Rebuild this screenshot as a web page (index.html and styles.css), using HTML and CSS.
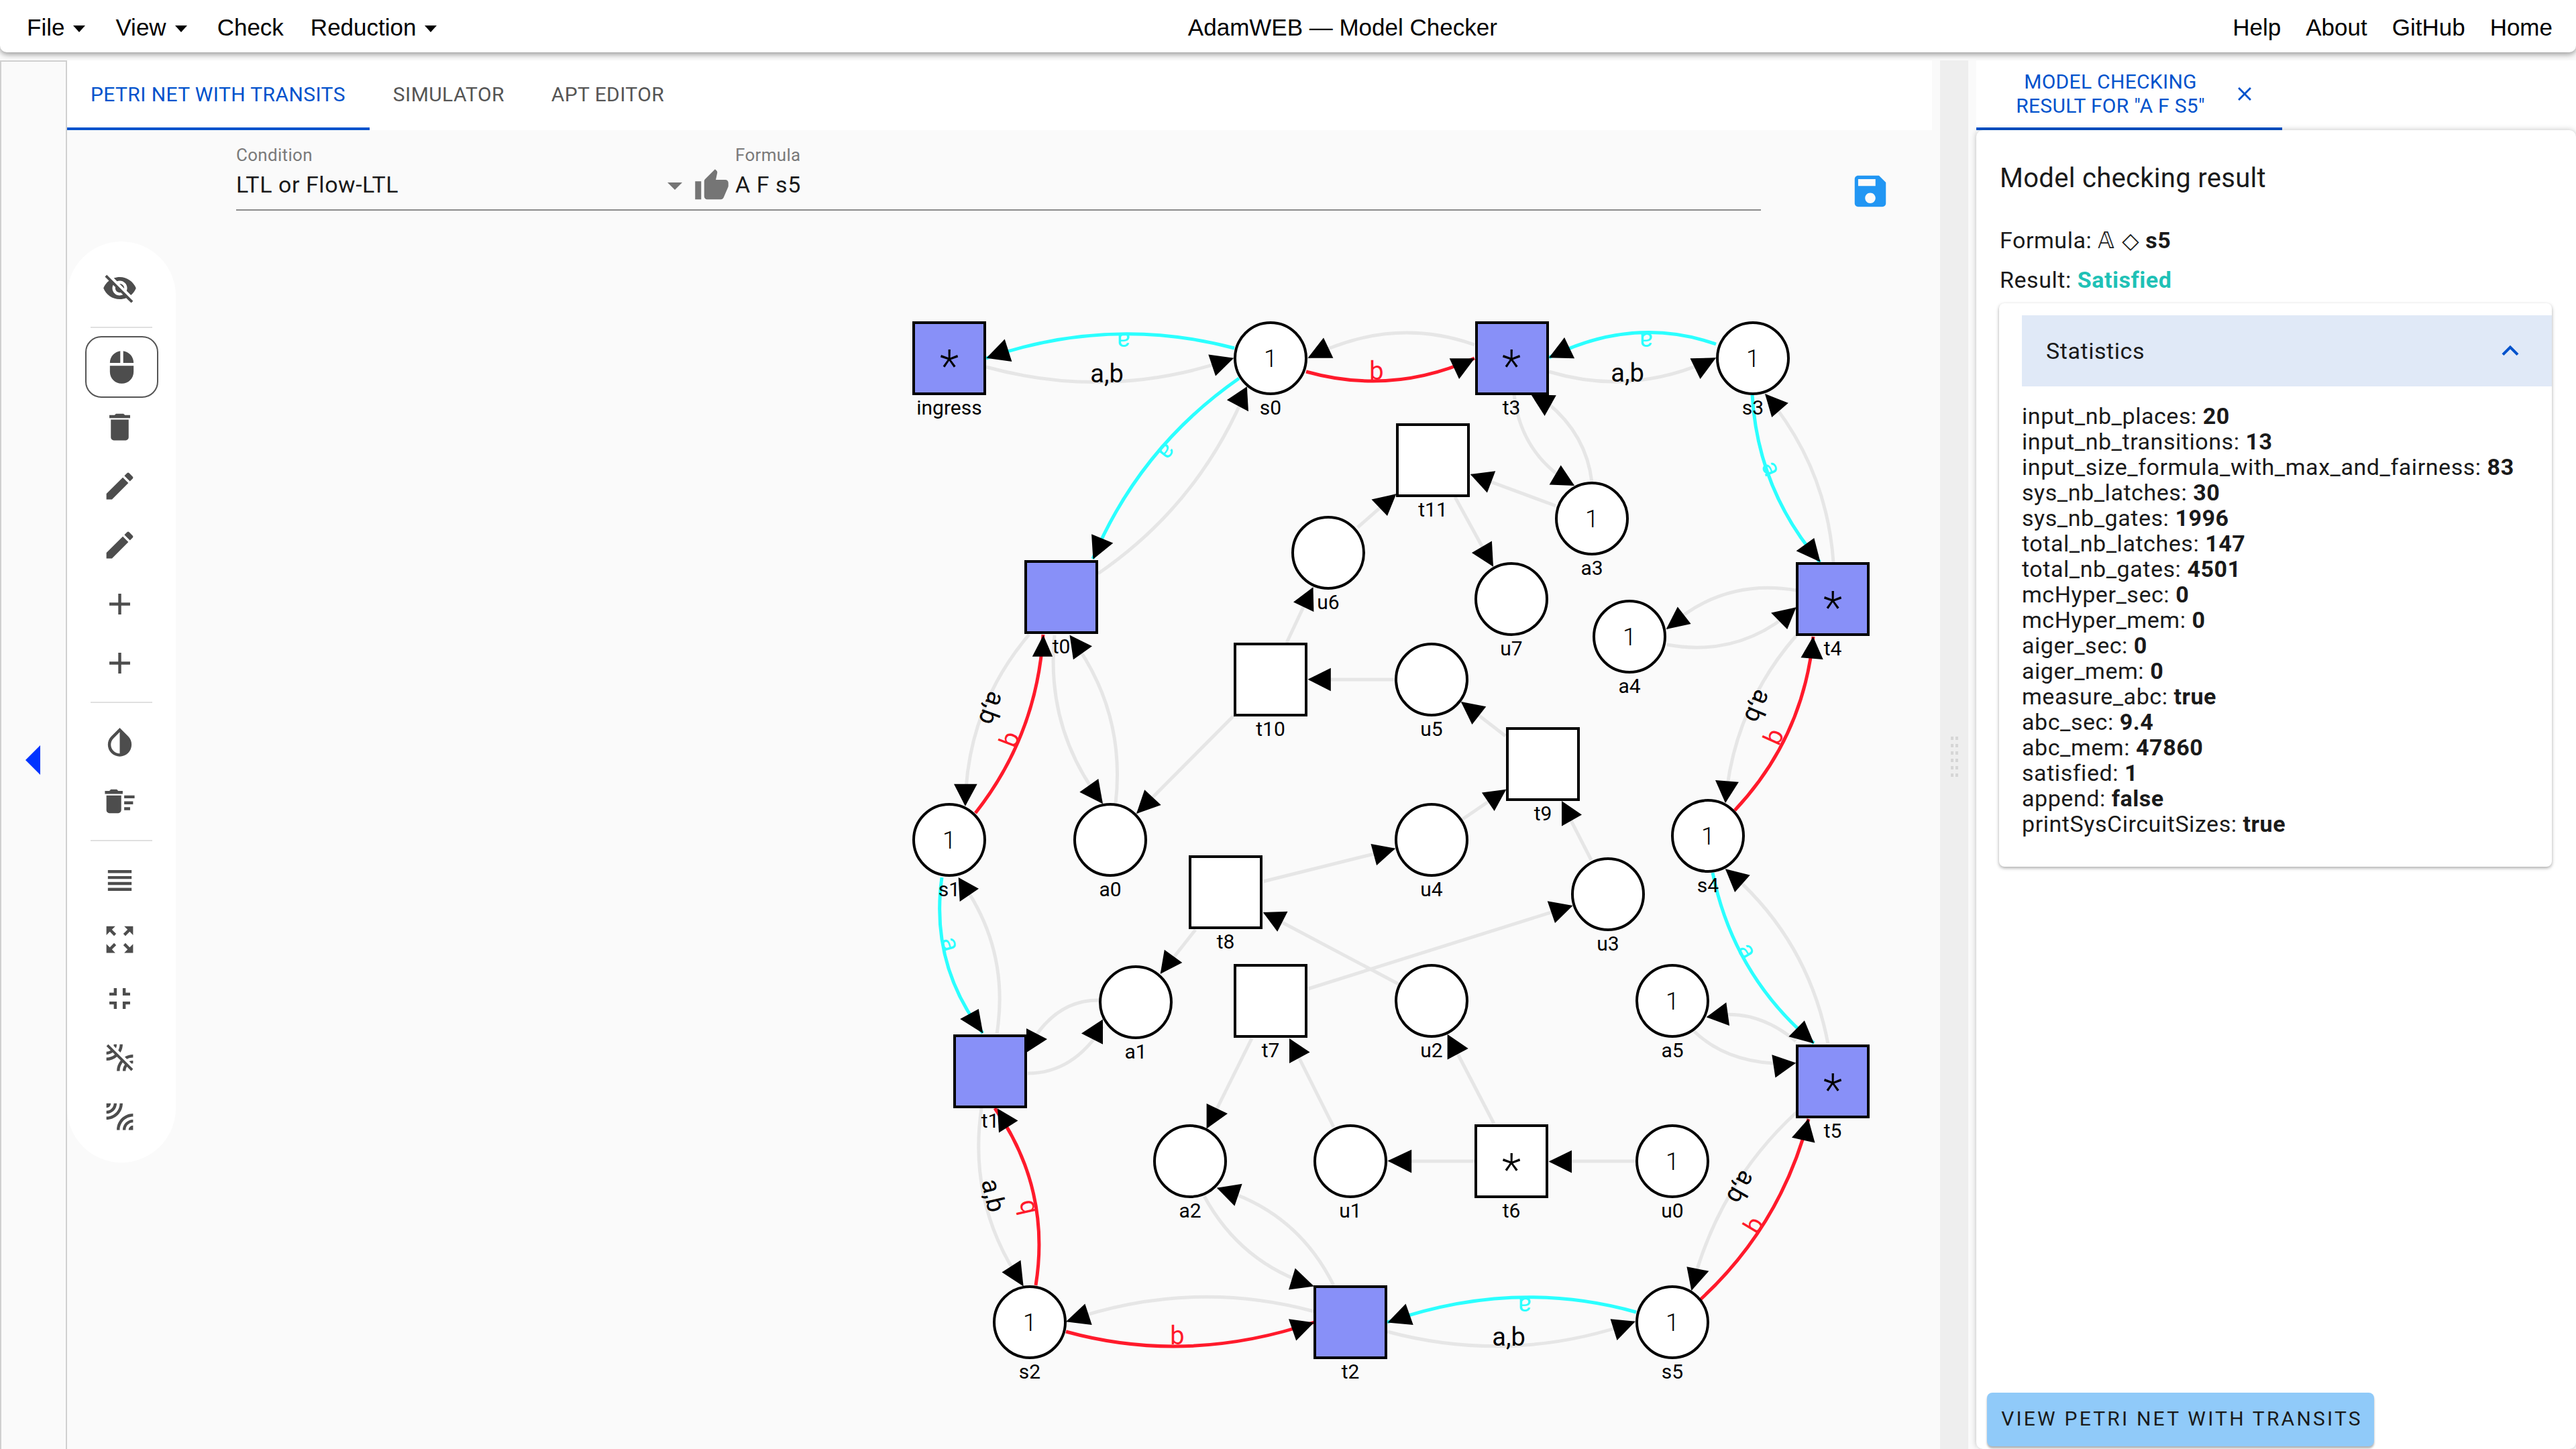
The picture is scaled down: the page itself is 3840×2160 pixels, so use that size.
FILE: index.html
```html
<!DOCTYPE html>
<html>
<head>
    <title>AdamWEB - Model Checker</title>
    <link rel="stylesheet" href="styles.css">
</head>
<body>
    <header class="app-bar">
        <nav class="menu">
            <span class="menu-item">File<i class="caret"></i></span>
            <span class="menu-item">View<i class="caret"></i></span>
            <span class="menu-item">Check</span>
            <span class="menu-item">Reduction<i class="caret"></i></span>
        </nav>
        <div class="app-title">AdamWEB — Model Checker</div>
        <nav class="links">
            <span>Help</span>
            <span>About</span>
            <span>GitHub</span>
            <span>Home</span>
        </nav>
    </header>

    <div class="workspace">
        <aside class="rail"><i class="collapse-arrow"></i></aside>

        <main class="main-pane">
            <div class="tabs">
                <div class="tab tab-active">PETRI NET WITH TRANSITS</div>
                <div class="tab">SIMULATOR</div>
                <div class="tab">APT EDITOR</div>
            </div>

            <div class="canvas">
                <svg class="graph" viewBox="100 194 2792 1966" width="2792" height="1966">
                    <!-- plain arcs -->
                    <g class="arc arc-grey">
                        <path d="M1470 547Q1655 598 1839 534"/>
                        <path d="M2198 514Q2075 470 1949 534"/>
                        <path d="M2309 554Q2435 592 2558 533"/>
                        <path d="M1637 855Q1790 750 1860 576"/>
                        <path d="M1534 946Q1441 1056 1439 1200"/>
                        <path d="M1572 947Q1558 1087 1644 1198"/>
                        <path d="M1663 1198Q1679 1059 1594 947"/>
                        <path d="M2373 719Q2365 648 2306 600"/>
                        <path d="M2257 588Q2267 679 2347 724"/>
                        <path d="M2319 754L2192 707"/>
                        <path d="M2024 786L2081 736"/>
                        <path d="M2169 741L2226 845"/>
                        <path d="M2733 838Q2723 696 2631 587"/>
                        <path d="M2678 880Q2567 861 2484 938"/>
                        <path d="M2485 961Q2595 981 2678 905"/>
                        <path d="M2678 947Q2584 1055 2572 1197"/>
                        <path d="M2244 1097L2178 1046"/>
                        <path d="M2179 1222L2245 1177"/>
                        <path d="M2372 1282L2330 1200"/>
                        <path d="M2080 1013H1950"/>
                        <path d="M1918 958L1957 875"/>
                        <path d="M1839 1067L1694 1213"/>
                        <path d="M1883 1314L2080 1265"/>
                        <path d="M2085 1467L1883 1360"/>
                        <path d="M1782 1386L1730 1452"/>
                        <path d="M1950 1474L2344 1350"/>
                        <path d="M1866 1548L1799 1683"/>
                        <path d="M1988 1680L1922 1548"/>
                        <path d="M2198 1731H2068"/>
                        <path d="M2227 1675L2173 1571"/>
                        <path d="M2439 1731H2309"/>
                        <path d="M1486 1541Q1506 1414 1430 1310"/>
                        <path d="M1639 1491Q1578 1490 1540 1550"/>
                        <path d="M1532 1600Q1600 1600 1644 1530"/>
                        <path d="M1959 1955Q1775 1905 1589 1970"/>
                        <path d="M1795 1783Q1850 1884 1959 1917"/>
                        <path d="M1988 1916Q1933 1805 1814 1771"/>
                        <path d="M2068 1985Q2255 2035 2438 1970"/>
                        <path d="M2725 1556Q2695 1398 2572 1295"/>
                        <path d="M2678 1658Q2560 1767 2521 1924"/>
                        <path d="M2525 1537Q2580 1590 2677 1585"/>
                        <path d="M2677 1552Q2615 1500 2544 1516"/>
                        <path d="M1463 1652Q1442 1797 1526 1917"/>
                    </g>
                    <g class="arc arc-cyan">
                        <path d="M1840 519Q1655 470 1470 534"/>
                        <path d="M1847 564Q1699 667 1629 833"/>
                        <path d="M2558 513Q2435 470 2309 533"/>
                        <path d="M2612 588Q2620 730 2713 838"/>
                        <path d="M1404 1308Q1386 1437 1465 1540"/>
                        <path d="M2553 1301Q2584 1454 2704 1555"/>
                        <path d="M2439 1956Q2258 1905 2068 1971"/>
                    </g>
                    <g class="arc arc-red">
                        <path d="M1947 554Q2075 590 2198 534"/>
                        <path d="M1454 1212Q1546 1095 1555 946"/>
                        <path d="M2586 1208Q2689 1098 2703 949"/>
                        <path d="M1544 1916Q1567 1772 1483 1652"/>
                        <path d="M1589 1985Q1770 2035 1959 1971"/>
                        <path d="M2535 1937Q2655 1826 2696 1668"/>
                    </g>

                    <!-- transitions -->
                    <g class="node">
                        <rect class="transit" x="1362" y="481" width="106" height="106"/>
                        <rect class="transit" x="2201" y="481" width="106" height="106"/>
                        <rect class="transit" x="1529" y="837" width="106" height="106"/>
                        <rect class="transit" x="2679" y="840" width="106" height="106"/>
                        <rect class="transit" x="1423" y="1544" width="106" height="106"/>
                        <rect class="transit" x="2679" y="1559" width="106" height="106"/>
                        <rect class="transit" x="1960" y="1918" width="106" height="106"/>
                        <rect x="2200" y="1678" width="106" height="106"/>
                        <rect x="1841" y="1439" width="106" height="106"/>
                        <rect x="1774" y="1277" width="106" height="106"/>
                        <rect x="2247" y="1086" width="106" height="106"/>
                        <rect x="1841" y="960" width="106" height="106"/>
                        <rect x="2083" y="633" width="106" height="106"/>
                    </g>
                    <!-- places -->
                    <g class="node">
                        <circle cx="1894" cy="534" r="53"/>
                        <circle cx="2613" cy="534" r="53"/>
                        <circle cx="2373" cy="773" r="53"/>
                        <circle cx="1980" cy="824" r="53"/>
                        <circle cx="2253" cy="893" r="53"/>
                        <circle cx="2429" cy="949" r="53"/>
                        <circle cx="2134" cy="1013" r="53"/>
                        <circle cx="1415" cy="1252" r="53"/>
                        <circle cx="1655" cy="1252" r="53"/>
                        <circle cx="2134" cy="1252" r="53"/>
                        <circle cx="2546" cy="1246" r="53"/>
                        <circle cx="2397" cy="1333" r="53"/>
                        <circle cx="1693" cy="1494" r="53"/>
                        <circle cx="2134" cy="1492" r="53"/>
                        <circle cx="2493" cy="1492" r="53"/>
                        <circle cx="1774" cy="1731" r="53"/>
                        <circle cx="2013" cy="1731" r="53"/>
                        <circle cx="2493" cy="1731" r="53"/>
                        <circle cx="1535" cy="1971" r="53"/>
                        <circle cx="2493" cy="1971" r="53"/>
                    </g>

                    <!-- arrow heads -->
                    <g class="heads">
                        <polygon points="1470.4,533.8 1497.7,505.6 1508.4,539.1"/>
                        <polygon points="1839.2,533.8 1801.3,528.4 1812,560.5"/>
                        <polygon points="1949.5,533.8 1973,503.4 1987.4,533.8"/>
                        <polygon points="1629.4,833.8 1627.1,796.3 1659.3,809.6"/>
                        <polygon points="1858.8,576.2 1828.9,596.3 1861,613.2"/>
                        <polygon points="1555.3,946.7 1538.8,978.8 1569.1,978.8"/>
                        <polygon points="1594.6,946.7 1628,963.2 1599.9,983.3"/>
                        <polygon points="1957.5,875.3 1928,897.6 1958.4,911.9"/>
                        <polygon points="1949.5,1012.8 1983.8,995.8 1983.8,1030.2"/>
                        <polygon points="2198.2,534.3 2160.7,534.3 2175.1,565.1"/>
                        <polygon points="2309,533.3 2332.1,503.1 2347.1,534.3"/>
                        <polygon points="2558.1,533.3 2519.5,534.3 2534.5,565.1"/>
                        <polygon points="2282.3,588.1 2319.8,589.2 2302.6,619.9"/>
                        <polygon points="2347.1,724.1 2326.7,693.4 2309.6,722.5"/>
                        <polygon points="2191.8,707.1 2229.2,702.2 2216.9,734.6"/>
                        <polygon points="2081.4,736.2 2044.5,744.4 2068,769.1"/>
                        <polygon points="2226,844.8 2223.9,806.4 2193.9,824"/>
                        <polygon points="2713.5,837.7 2677.6,821.2 2704.3,802"/>
                        <polygon points="2631,587 2665.8,600.7 2641.2,622.1"/>
                        <polygon points="2483.7,938.1 2500.8,904.6 2520.6,929.9"/>
                        <polygon points="2677.6,905.2 2640.1,913.4 2664.2,938.1"/>
                        <polygon points="2572,1197 2557,1163 2591.9,1165.7"/>
                        <polygon points="2702.7,949 2684.5,980.3 2717.7,983"/>
                        <polygon points="2177.8,1046.1 2215.3,1053.3 2194.4,1080.1"/>
                        <polygon points="2245.3,1176.7 2208.9,1181.6 2227.6,1209"/>
                        <polygon points="2328,1194 2328,1231.6 2358,1214.6"/>
                        <polygon points="1438.9,1201.8 1422,1168.8 1456.7,1168.8"/>
                        <polygon points="1644,1198.2 1609.3,1180.8 1637.3,1161"/>
                        <polygon points="1694,1213.1 1706.2,1177.2 1730.7,1200"/>
                        <polygon points="1428.7,1308 1459,1324.7 1430.7,1344"/>
                        <polygon points="2080.2,1264.7 2043.5,1258.1 2052.1,1289.9"/>
                        <polygon points="1882.8,1360 1919.5,1358.8 1904.2,1388.8"/>
                        <polygon points="1729.7,1451.8 1735.8,1415.8 1762.3,1435"/>
                        <polygon points="1530,1533 1561,1549 1530,1569"/>
                        <polygon points="1612,1540.5 1644,1519.5 1644,1556.7"/>
                        <polygon points="1465.4,1540.5 1431.2,1518.9 1458.8,1503.9"/>
                        <polygon points="1798.6,1645 1830,1660 1798.6,1682.6"/>
                        <polygon points="1922,1548 1952.6,1568.6 1922,1585"/>
                        <polygon points="2068.5,1730.5 2104.2,1713.7 2104.2,1748.5"/>
                        <polygon points="1487,1652.6 1517.5,1670.6 1489,1688.6"/>
                        <polygon points="1525.6,1917.6 1493.5,1896.6 1521.5,1878.6"/>
                        <polygon points="1813.9,1770.7 1851.6,1764.7 1840.4,1797.7"/>
                        <polygon points="1958.8,1917.6 1930.7,1890.6 1921,1922.4"/>
                        <polygon points="1588.9,1970.3 1617.4,1943.4 1627.7,1975.1"/>
                        <polygon points="1958.8,1971.5 1921,1966.2 1932.2,1998.5"/>
                        <polygon points="2068.5,1971.5 2095.5,1943.4 2106.7,1975.1"/>
                        <polygon points="2344.5,1349.9 2306.7,1343.3 2318,1375.9"/>
                        <polygon points="2704.1,1555.5 2666.3,1545.3 2689.9,1521.3"/>
                        <polygon points="2571.9,1295.3 2608.7,1304.5 2586.1,1330"/>
                        <polygon points="2677.2,1584.6 2641.3,1572.3 2646.5,1606.5"/>
                        <polygon points="2543.6,1516.2 2573.3,1494.3 2578.1,1529"/>
                        <polygon points="2157.6,1541.7 2188.7,1563 2157.6,1579.5"/>
                        <polygon points="2308.6,1731.5 2343,1714.7 2343,1748.4"/>
                        <polygon points="2521.4,1923.9 2514.4,1888.2 2547.4,1894.8"/>
                        <polygon points="2695.6,1667.8 2671,1695.8 2705.5,1703.5"/>
                        <polygon points="2437.9,1969.8 2400.6,1966.2 2410.5,1997.9"/>
                    </g>

                    <!-- arc labels -->
                    <g class="arc-label label-weight">
                        <text transform="translate(1650 557)">a,b</text>
                        <text transform="translate(1479 1056) rotate(110)">a,b</text>
                        <text transform="translate(2426 556)">a,b</text>
                        <text transform="translate(2621 1053) rotate(113)">a,b</text>
                        <text transform="translate(2596 1770) rotate(120)">a,b</text>
                        <text transform="translate(2249 1993)">a,b</text>
                        <text transform="translate(1481 1782) rotate(77)">a,b</text>
                    </g>
                    <g class="arc-label label-cyan">
                        <text transform="translate(1675 509) rotate(180)">a</text>
                        <text transform="translate(1740 674) rotate(129)">a</text>
                        <text transform="translate(2454 509) rotate(180)">a</text>
                        <text transform="translate(2641 698) rotate(68)">a</text>
                        <text transform="translate(1417 1407) rotate(75)">a</text>
                        <text transform="translate(2605 1417) rotate(59)">a</text>
                        <text transform="translate(2273 1947) rotate(180)">a</text>
                    </g>
                    <g class="arc-label label-red">
                        <text transform="translate(2052 553)">b</text>
                        <text transform="translate(1505 1102) rotate(-69)">b</text>
                        <text transform="translate(2644 1098) rotate(-66)">b</text>
                        <text transform="translate(2614 1826) rotate(-59)">b</text>
                        <text transform="translate(1529 1800) rotate(-103)">b</text>
                        <text transform="translate(1755 1991)">b</text>
                    </g>

                    <!-- tokens and fairness marks -->
                    <g class="token">
                        <text x="1894" y="547">1</text>
                        <text x="2613" y="547">1</text>
                        <text x="2373" y="786">1</text>
                        <text x="2429" y="962">1</text>
                        <text x="1415" y="1265">1</text>
                        <text x="2546" y="1259">1</text>
                        <text x="2493" y="1505">1</text>
                        <text x="2493" y="1744">1</text>
                        <text x="1535" y="1984">1</text>
                        <text x="2493" y="1984">1</text>
                    </g>
                    <g class="star">
                        <text x="1415" y="569">*</text>
                        <text x="2253" y="569">*</text>
                        <text x="2732" y="929">*</text>
                        <text x="2732" y="1648">*</text>
                        <text x="2253" y="1767">*</text>
                    </g>

                    <!-- node names -->
                    <g class="node-name">
                        <text x="1415" y="618">ingress</text>
                        <text x="1894" y="618">s0</text>
                        <text x="2253" y="618">t3</text>
                        <text x="2613" y="618">s3</text>
                        <text x="2136" y="770">t11</text>
                        <text x="2373" y="857">a3</text>
                        <text x="1980" y="908">u6</text>
                        <text x="1582" y="974">t0</text>
                        <text x="2253" y="977">u7</text>
                        <text x="2732" y="977">t4</text>
                        <text x="2429" y="1033">a4</text>
                        <text x="1894" y="1097">t10</text>
                        <text x="2134" y="1097">u5</text>
                        <text x="2300" y="1223">t9</text>
                        <text x="1415" y="1336">s1</text>
                        <text x="1655" y="1336">a0</text>
                        <text x="2134" y="1336">u4</text>
                        <text x="2546" y="1330">s4</text>
                        <text x="1827" y="1414">t8</text>
                        <text x="2397" y="1417">u3</text>
                        <text x="1894" y="1576">t7</text>
                        <text x="1693" y="1578">a1</text>
                        <text x="2134" y="1576">u2</text>
                        <text x="2493" y="1576">a5</text>
                        <text x="1476" y="1681">t1</text>
                        <text x="2732" y="1696">t5</text>
                        <text x="1774" y="1815">a2</text>
                        <text x="2013" y="1815">u1</text>
                        <text x="2253" y="1815">t6</text>
                        <text x="2493" y="1815">u0</text>
                        <text x="1535" y="2055">s2</text>
                        <text x="2013" y="2055">t2</text>
                        <text x="2493" y="2055">s5</text>
                    </g>
                </svg>

                <div class="formula-row">
                    <div class="formula-bar">
                        <div class="field-select">
                            <label class="field-label">Condition</label>
                            <div class="select-value"><span>LTL or Flow-LTL</span><i class="select-caret"></i></div>
                        </div>
                        <svg class="thumb" viewBox="0 0 24 24"><path d="M1 21h4V9H1v12zm22-11c0-1.1-.9-2-2-2h-6.31l.95-4.57.03-.32c0-.41-.17-.79-.44-1.06L14.17 1 7.59 7.59C7.22 7.95 7 8.45 7 9v10c0 1.1.9 2 2 2h9c.83 0 1.54-.5 1.84-1.22l3.02-7.05c.09-.23.14-.47.14-.73v-2z"/></svg>
                        <div class="field-formula">
                            <label class="field-label">Formula</label>
                            <div class="formula-value">A F s5</div>
                        </div>
                    </div>
                    <svg class="save" viewBox="0 0 24 24"><path d="M17 3H5c-1.11 0-2 .9-2 2v14c0 1.1.89 2 2 2h14c1.1 0 2-.9 2-2V7l-4-4zm-5 16c-1.66 0-3-1.34-3-3s1.34-3 3-3 3 1.34 3 3-1.34 3-3 3zm3-10H5V5h10v4z"/></svg>
                </div>

                <div class="toolbar">
                    <div class="tool"><svg viewBox="0 0 24 24"><path d="M12 7c2.76 0 5 2.24 5 5 0 .65-.13 1.26-.36 1.83l2.92 2.92c1.51-1.26 2.7-2.89 3.43-4.75-1.73-4.39-6-7.5-11-7.5-1.4 0-2.74.25-3.98.7l2.16 2.16C10.74 7.13 11.35 7 12 7zM2 4.27l2.28 2.28.46.46C3.08 8.3 1.78 10.02 1 12c1.73 4.39 6 7.5 11 7.5 1.55 0 3.03-.3 4.38-.84l.42.42L19.73 22 21 20.73 3.27 3 2 4.27zM7.53 9.8l1.55 1.55c-.05.21-.08.43-.08.65 0 1.66 1.34 3 3 3 .22 0 .44-.03.65-.08l1.55 1.55c-.67.33-1.41.53-2.2.53-2.76 0-5-2.24-5-5 0-.79.2-1.53.53-2.2zm4.31-.78l3.15 3.15.02-.16c0-1.66-1.34-3-3-3l-.17.01z"/></svg></div>
                    <hr class="tool-divider">
                    <div class="tool tool-active"><svg viewBox="0 0 24 24"><path d="M13 1.07V9h7c0-4.08-3.05-7.44-7-7.93zM4 15c0 4.42 3.58 8 8 8s8-3.58 8-8v-4H4v4zm7-13.93C7.05 1.56 4 4.92 4 9h7V1.07z"/></svg></div>
                    <div class="tool"><svg viewBox="0 0 24 24"><path d="M6 19c0 1.1.9 2 2 2h8c1.1 0 2-.9 2-2V7H6v12zM19 4h-3.5l-1-1h-5l-1 1H5v2h14V4z"/></svg></div>
                    <div class="tool"><svg viewBox="0 0 24 24"><path d="M3 17.25V21h3.75L17.81 9.94l-3.75-3.75L3 17.25zM20.71 7.04c.39-.39.39-1.02 0-1.41l-2.34-2.34c-.39-.39-1.02-.39-1.41 0l-1.83 1.83 3.75 3.75 1.83-1.83z"/></svg></div>
                    <div class="tool"><svg viewBox="0 0 24 24"><path d="M3 17.25V21h3.75L17.81 9.94l-3.75-3.75L3 17.25zM20.71 7.04c.39-.39.39-1.02 0-1.41l-2.34-2.34c-.39-.39-1.02-.39-1.41 0l-1.83 1.83 3.75 3.75 1.83-1.83z"/></svg></div>
                    <div class="tool"><svg viewBox="0 0 24 24"><path d="M19 13h-6v6h-2v-6H5v-2h6V5h2v6h6v2z"/></svg></div>
                    <div class="tool"><svg viewBox="0 0 24 24"><path d="M19 13h-6v6h-2v-6H5v-2h6V5h2v6h6v2z"/></svg></div>
                    <hr class="tool-divider">
                    <div class="tool"><svg viewBox="0 0 24 24"><path d="M17.66 7.93L12 2.27 6.34 7.93c-3.12 3.12-3.12 8.19 0 11.31C7.9 20.8 9.95 21.58 12 21.58c2.05 0 4.1-.78 5.66-2.34 3.12-3.12 3.12-8.19 0-11.31zM12 19.59c-1.6 0-3.11-.62-4.24-1.76C6.62 16.69 6 15.19 6 13.59s.62-3.11 1.76-4.24L12 5.1v14.49z"/></svg></div>
                    <div class="tool"><svg viewBox="0 0 24 24"><path d="M15 16h4v2h-4zm0-8h7v2h-7zm0 4h6v2h-6zM3 18c0 1.1.9 2 2 2h6c1.1 0 2-.9 2-2V8H3v10zM14 5h-3l-1-1H6L5 5H2v2h12z"/></svg></div>
                    <hr class="tool-divider">
                    <div class="tool"><svg viewBox="0 0 24 24"><path d="M4 15h16v-2H4v2zm0 4h16v-2H4v2zm0-8h16V9H4v2zm0-6v2h16V5H4z"/></svg></div>
                    <div class="tool"><svg viewBox="0 0 24 24"><path d="M15 3l2.3 2.3-2.89 2.87 1.42 1.42L18.7 6.7 21 9V3zM3 9l2.3-2.3 2.87 2.89 1.42-1.42L6.7 5.3 9 3H3zm6 12l-2.3-2.3 2.89-2.87-1.42-1.42L5.3 17.3 3 15v6zm12-6l-2.3 2.3-2.87-2.89-1.42 1.42 2.89 2.87L15 21h6z"/></svg></div>
                    <div class="tool"><svg viewBox="0 0 24 24"><path d="M5 16h3v3h2v-5H5v2zm3-8H5v2h5V5H8v3zm6 11h2v-3h3v-2h-5v5zm2-11V5h-2v5h5V8h-3z"/></svg></div>
                    <div class="tool"><svg viewBox="0 0 24 24"><path d="M10 3H8c0 .37-.04.72-.12 1.06l1.59 1.59C9.81 4.84 10 3.94 10 3zM3 4.27l2.84 2.84C5.03 7.67 4.06 8 3 8v2c1.61 0 3.09-.55 4.27-1.46L8.7 9.97C7.14 11.24 5.16 12 3 12v2c2.71 0 5.19-.99 7.11-2.62l2.5 2.5C10.99 15.81 10 18.29 10 21h2c0-2.16.76-4.14 2.03-5.69l1.43 1.43C14.55 17.91 14 19.39 14 21h2c0-1.06.33-2.03.89-2.84L19.73 21 21 19.73 4.27 3 3 4.27zM14 3h-2c0 1.5-.37 2.91-1.02 4.16l1.46 1.46C13.42 6.98 14 5.06 14 3zm5.94 13.12c.34-.08.69-.12 1.06-.12v-2c-.94 0-1.84.19-2.66.52l1.6 1.6zm-4.56-4.56l1.46 1.46C18.09 12.37 19.5 12 21 12v-2c-2.06 0-3.98.58-5.62 1.56z"/></svg></div>
                    <div class="tool"><svg viewBox="0 0 24 24"><path d="M6 3H3v3c1.66 0 3-1.34 3-3zm8 0h-2c0 4.97-4.03 9-9 9v2c6.08 0 11-4.93 11-11zm-4 0H8c0 2.76-2.24 5-5 5v2c3.87 0 7-3.13 7-7zm0 18h2c0-4.97 4.03-9 9-9v-2c-6.07 0-11 4.93-11 11zm8 0h3v-3c-1.66 0-3 1.34-3 3zm-4 0h2c0-2.76 2.24-5 5-5v-2c-3.87 0-7 3.13-7 7z"/></svg></div>
                </div>
            </div>
        </main>

        <div class="gutter"><i class="grip"></i></div>
        <div class="gutter-edge"></div>

        <section class="side-pane">
            <div class="side-tabs">
                <div class="side-tab">
                    <span class="side-tab-text">MODEL CHECKING<br>RESULT FOR "A F S5"</span>
                    <svg class="tab-close" viewBox="0 0 24 24"><path d="M19 6.41L17.59 5 12 10.59 6.41 5 5 6.41 10.59 12 5 17.59 6.41 19 12 13.41 17.59 19 19 17.59 13.41 12z"/></svg>
                </div>
            </div>

            <div class="result-card">
                <h2 class="result-title">Model checking result</h2>
                <p class="result-line">Formula: <span class="math">𝔸 ◇</span> <b>s5</b></p>
                <p class="result-line">Result: <b class="satisfied">Satisfied</b></p>

                <div class="stats-card">
                    <div class="stats-head">
                        <span>Statistics</span>
                        <svg viewBox="0 0 24 24"><path d="M12 8l-6 6 1.41 1.41L12 10.83l4.59 4.58L18 14z"/></svg>
                    </div>
                    <ul class="stats-list">
                        <li>input_nb_places: <b>20</b></li>
                        <li>input_nb_transitions: <b>13</b></li>
                        <li>input_size_formula_with_max_and_fairness: <b>83</b></li>
                        <li>sys_nb_latches: <b>30</b></li>
                        <li>sys_nb_gates: <b>1996</b></li>
                        <li>total_nb_latches: <b>147</b></li>
                        <li>total_nb_gates: <b>4501</b></li>
                        <li>mcHyper_sec: <b>0</b></li>
                        <li>mcHyper_mem: <b>0</b></li>
                        <li>aiger_sec: <b>0</b></li>
                        <li>aiger_mem: <b>0</b></li>
                        <li>measure_abc: <b>true</b></li>
                        <li>abc_sec: <b>9.4</b></li>
                        <li>abc_mem: <b>47860</b></li>
                        <li>satisfied: <b>1</b></li>
                        <li>append: <b>false</b></li>
                        <li>printSysCircuitSizes: <b>true</b></li>
                    </ul>
                </div>

                <button class="view-button">VIEW PETRI NET WITH TRANSITS</button>
            </div>
        </section>
    </div>
</body>
</html>
```

FILE: styles.css
```css
/* Global */
* {
    box-sizing: border-box;
}

body {
    margin: 0;
    width: 3840px;
    height: 2160px;
    overflow: hidden;
    background-color: #fafafa;
    color: #1a1a1a;
    font-family: Roboto, "Liberation Sans", sans-serif;
    font-size: 34px;
    letter-spacing: 0.55px;
    display: flex;
    flex-direction: column;
}

/* Top bar */
.app-bar {
    height: 78px;
    flex-shrink: 0;
    display: flex;
    align-items: center;
    justify-content: space-between;
    padding: 4px 35px 0 40px;
    margin-bottom: 12px;
    background-color: #fff;
    color: #000;
    font-family: "Liberation Sans", Arial, sans-serif;
    font-size: 35px;
    letter-spacing: 0;
    border-radius: 0 0 10px 10px;
    box-shadow: 0 3px 8px rgba(0, 0, 0, 0.4);
    position: relative;
    z-index: 2;
}

.menu {
    display: flex;
    gap: 40px;
}

.menu-item {
    display: flex;
    align-items: center;
}

.caret {
    width: 0;
    height: 0;
    margin: 4px 5px 0 13px;
    border-left: 9px solid transparent;
    border-right: 9px solid transparent;
    border-top: 10px solid #000;
}

.app-title {
    margin-left: 18px;
}

.links {
    display: flex;
    gap: 37px;
}

/* Page columns */
.workspace {
    flex: 1;
    display: flex;
    min-height: 0;
}

.rail {
    width: 100px;
    flex-shrink: 0;
    display: flex;
    align-items: center;
    padding: 14px 0 0 36px;
    background-color: #fafafa;
    border: 2px solid #d0d0d0;
    border-bottom: none;
}

.collapse-arrow {
    width: 0;
    height: 0;
    border-top: 22px solid transparent;
    border-bottom: 22px solid transparent;
    border-right: 22px solid #0033ff;
}

.main-pane {
    width: 2792px;
    flex-shrink: 0;
    display: flex;
    flex-direction: column;
}

/* Tabs */
.tabs {
    width: 2780px;
    height: 104px;
    flex-shrink: 0;
    display: flex;
    background-color: #fff;
}

.tab {
    height: 104px;
    padding: 0 35px 4px 35px;
    display: flex;
    align-items: center;
    color: #555;
    font-size: 30px;
    letter-spacing: 0.4px;
}

.tab-active {
    color: #0052cc;
    border-bottom: 4px solid #0052cc;
    padding-bottom: 0;
    padding-right: 36px;
}

/* Canvas with the net */
.canvas {
    flex: 1;
    position: relative;
}

.graph {
    position: absolute;
    left: 0;
    top: 0;
    display: block;
    font-family: Roboto, sans-serif;
    letter-spacing: 0;
}

.arc path {
    fill: none;
    stroke-width: 5;
}

.arc-grey path {
    stroke: #e6e6e6;
}

.arc-cyan path {
    stroke: #2bffff;
}

.arc-red path {
    stroke: #ff1a2b;
}

.node rect,
.node circle {
    fill: #fff;
    stroke: #000;
    stroke-width: 4;
}

.node .transit {
    fill: #8890f8;
}

.heads polygon {
    fill: #000;
}

.arc-label text {
    font-size: 38px;
    text-anchor: middle;
    dominant-baseline: central;
}

.label-weight {
    fill: #000;
}

.label-cyan {
    fill: #2bffff;
}

.label-red {
    fill: #ff1a2b;
}

.token text {
    font-size: 36px;
    font-weight: 300;
    text-anchor: middle;
    fill: #000;
}

.star text {
    font-size: 66px;
    font-weight: 300;
    text-anchor: middle;
    fill: #000;
}

.node-name text {
    font-size: 30px;
    text-anchor: middle;
    fill: #000;
}

/* Condition and formula */
.formula-row {
    position: relative;
    display: flex;
    align-items: flex-start;
    padding: 22px 0 0 252px;
}

.formula-bar {
    width: 2273px;
    height: 98px;
    display: flex;
    align-items: flex-start;
    border-bottom: 2px solid #8b8b8b;
}

.field-select {
    width: 680px;
}

.field-label {
    display: block;
    font-size: 26px;
    letter-spacing: 0.3px;
    line-height: 30px;
    color: #7a7a7a;
}

.select-value {
    margin-top: 9px;
    line-height: 40px;
    display: flex;
    align-items: center;
    justify-content: space-between;
    padding-right: 15px;
}

.select-caret {
    width: 0;
    height: 0;
    margin-top: 4px;
    border-left: 11px solid transparent;
    border-right: 11px solid transparent;
    border-top: 11px solid #757575;
}

.thumb {
    width: 54px;
    height: 54px;
    margin: 34px 8px 0 2px;
    flex-shrink: 0;
}

.thumb path {
    fill: #757575;
}

.formula-value {
    margin-top: 9px;
    line-height: 40px;
}

.save {
    width: 62px;
    height: 62px;
    margin: 38px 0 0 132px;
}

.save path {
    fill: #2196f3;
}

/* Floating tool strip */
.toolbar {
    position: absolute;
    left: 0;
    top: 166px;
    width: 162px;
    height: 1373px;
    padding: 25px 0;
    display: flex;
    flex-direction: column;
    align-items: center;
    background-color: #fff;
    border-radius: 81px;
}

.tool {
    height: 88px;
    flex-shrink: 0;
    display: flex;
    align-items: center;
    justify-content: center;
    margin-right: 6px;
}

.tool svg {
    width: 53px;
    height: 53px;
}

.tool path {
    fill: #4d4d4d;
}

.tool-active {
    width: 109px;
    height: 92px;
    margin: -2px 0 -1px 0;
    border: 2px solid #555;
    border-radius: 24px;
}

.tool-divider {
    width: 92px;
    height: 2px;
    flex-shrink: 0;
    margin: 14px 0;
    border: none;
    background-color: #e0e0e0;
}

/* Splitter */
.gutter {
    width: 42px;
    flex-shrink: 0;
    display: flex;
    align-items: center;
    justify-content: center;
    padding-top: 12px;
    background-color: #eee;
}

.grip {
    width: 11px;
    height: 66px;
    background:
        linear-gradient(#d6d6d6 50%, transparent 50%) 0 0 / 4px 11px repeat-y,
        linear-gradient(#d6d6d6 50%, transparent 50%) 7px 0 / 4px 11px repeat-y;
}

.gutter-edge {
    width: 12px;
    flex-shrink: 0;
}

/* Result pane */
.side-pane {
    flex: 1;
    display: flex;
    flex-direction: column;
    background-color: #fff;
}

.side-tabs {
    height: 104px;
    flex-shrink: 0;
}

.side-tab {
    width: 456px;
    height: 104px;
    display: flex;
    align-items: center;
    padding-left: 30px;
    color: #0052cc;
    font-size: 30px;
    letter-spacing: 0.3px;
    line-height: 36px;
    border-bottom: 4px solid #0052cc;
}

.side-tab-text {
    width: 340px;
    text-align: center;
}

.tab-close {
    width: 34px;
    height: 34px;
    margin-left: 13px;
}

.tab-close path {
    fill: #0052cc;
}

.result-card {
    flex: 1;
    display: flex;
    flex-direction: column;
    align-items: flex-start;
    padding: 48px 36px 4px 35px;
    background-color: #fff;
    border-radius: 10px;
    box-shadow: 0 0 8px rgba(0, 0, 0, 0.25);
}

.result-title {
    margin: 0 0 49px 0;
    font-size: 40px;
    font-weight: 400;
    letter-spacing: 0.3px;
    line-height: 48px;
    color: #1a1a1a;
}

.result-line {
    height: 38px;
    margin: 0 0 21px 0;
    line-height: 38px;
}

.result-line b {
    font-weight: 700;
}

.math {
    font-family: "DejaVu Sans", sans-serif;
    font-size: 33px;
    line-height: 1;
}

.satisfied {
    color: #1fc1b6;
}

.result-line + .stats-card {
    margin-top: -5px;
}

.stats-card {
    width: 824px;
    height: 840px;
    margin-left: -1px;
    padding: 18px 0 0 34px;
    border-radius: 8px;
    box-shadow: 0 2px 5px rgba(0, 0, 0, 0.35);
}

.stats-head {
    height: 106px;
    display: flex;
    align-items: center;
    justify-content: space-between;
    padding: 0 37px 0 36px;
    background-color: #e0e9f7;
}

.stats-head svg {
    width: 50px;
    height: 50px;
}

.stats-head path {
    fill: #0052cc;
}

.stats-list {
    list-style-type: none;
    margin: 25px 0 0 0;
    padding: 0;
    line-height: 38px;
}

.stats-list b {
    font-weight: 700;
}

.view-button {
    margin: auto 0 0 -19px;
    width: 577px;
    height: 80px;
    padding: 0 0 3px 4px;
    border: none;
    border-radius: 8px;
    background-color: #90caf9;
    color: #1a1a1a;
    font-family: Roboto, sans-serif;
    font-size: 30px;
    letter-spacing: 3.2px;
    box-shadow: 0 3px 3px rgba(0, 0, 0, 0.3);
}
```
